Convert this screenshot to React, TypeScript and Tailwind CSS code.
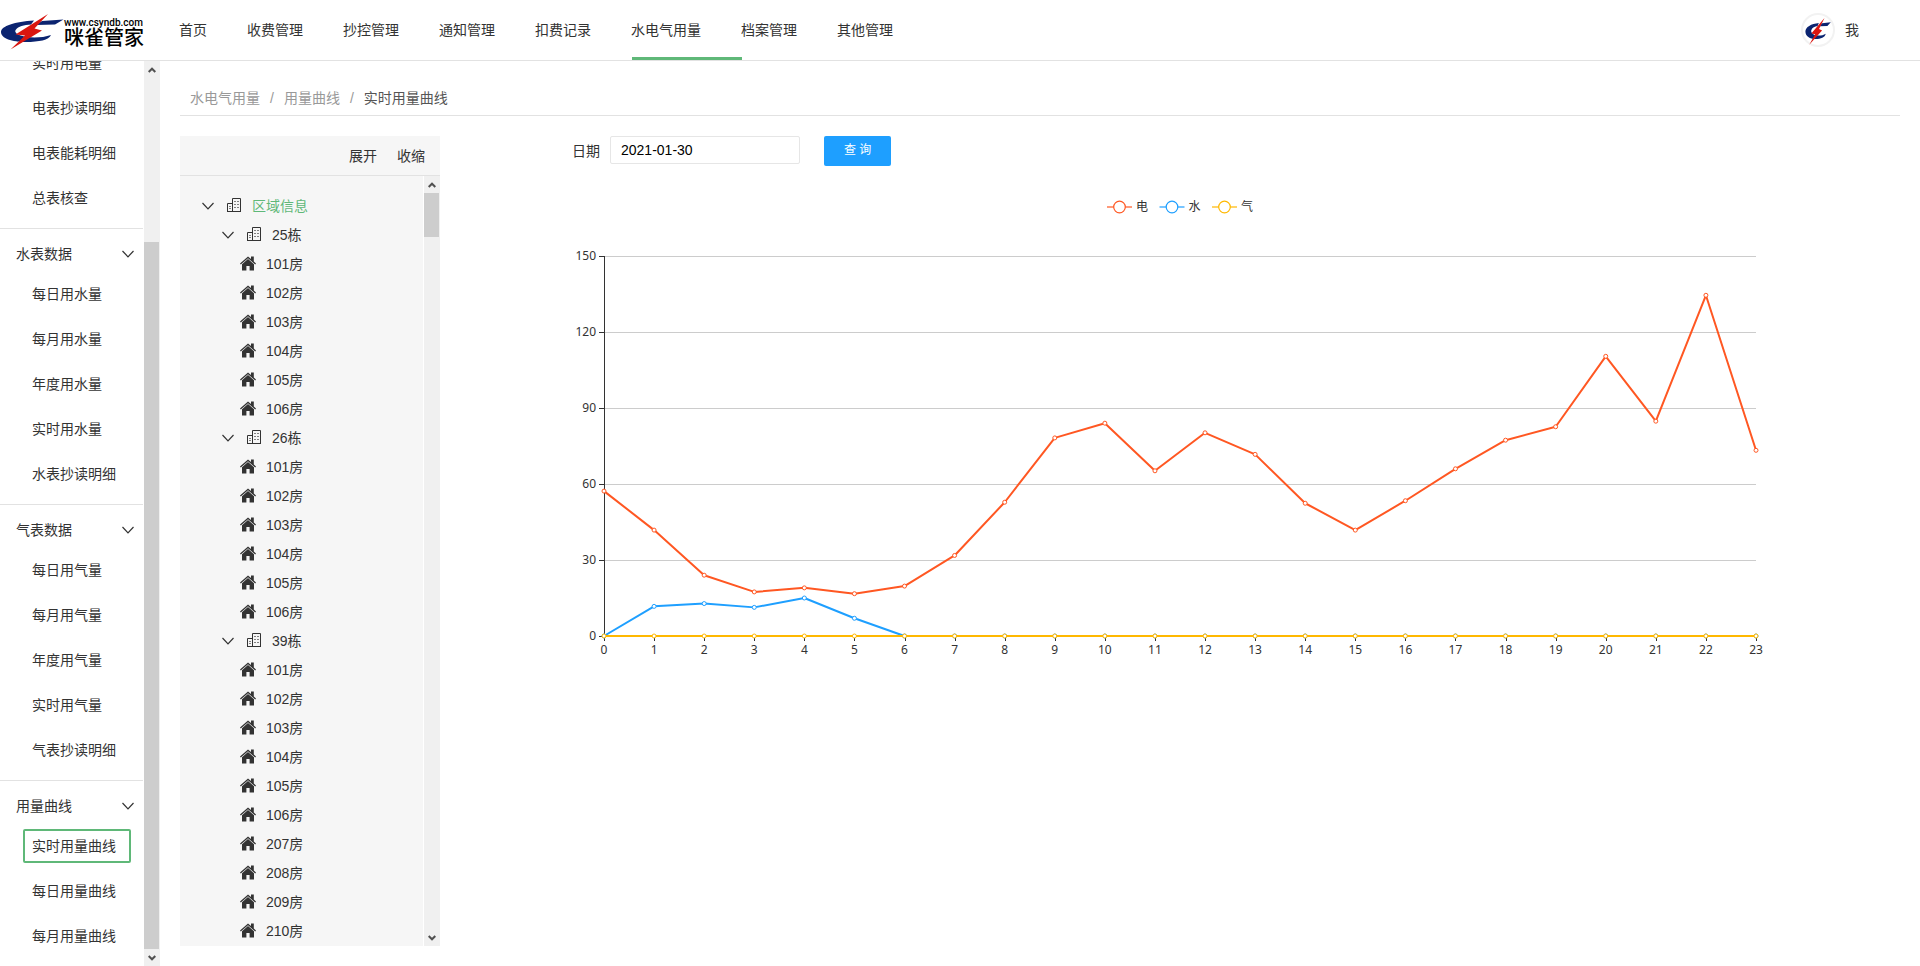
import React, { useState } from 'react';

const navItems = ['首页', '收费管理', '抄控管理', '通知管理', '扣费记录', '水电气用量', '档案管理', '其他管理'];

const menuGroups = [
    { title: '', items: ['实时用电量', '电表抄读明细', '电表能耗明细', '总表核查'] },
    { title: '水表数据', items: ['每日用水量', '每月用水量', '年度用水量', '实时用水量', '水表抄读明细'] },
    { title: '气表数据', items: ['每日用气量', '每月用气量', '年度用气量', '实时用气量', '气表抄读明细'] },
    { title: '用量曲线', items: ['实时用量曲线', '每日用量曲线', '每月用量曲线'] },
];

const buildings = [
    { name: '25栋', rooms: ['101房', '102房', '103房', '104房', '105房', '106房'] },
    { name: '26栋', rooms: ['101房', '102房', '103房', '104房', '105房', '106房'] },
    { name: '39栋', rooms: ['101房', '102房', '103房', '104房', '105房', '106房', '207房', '208房', '209房', '210房'] },
];

const zeros = Array(24).fill(0);

const series = [
    {
        name: '电',
        color: '#FF5722',
        data: [57.2, 41.8, 24, 17.4, 19, 16.7, 19.7, 31.8, 52.8, 78.2, 84, 65.2, 80.2, 71.7, 52.4, 41.8, 53.4, 66, 77.3, 82.6, 110.4, 84.8, 134.5, 73.3],
    },
    { name: '水', color: '#1E9FFF', data: [0, 11.7, 12.8, 11.3, 15, 7, ...Array(18).fill(0)] },
    { name: '气', color: '#FFB800', data: zeros },
];

const LogoMark = ({ className }: { className: string }) => (
    <svg viewBox="0 0 64 40" preserveAspectRatio="none" className={className} aria-hidden="true">
        <path d="M42 11 L63.5 9.5 L55 14.5 L36 15 Z" fill="#0b2470" />
        <path d="M34 10.5 C15 11.5 1 16 1 22 C1 28.5 12 32 26 32 C39 32 49 30 51 25 C44 27.5 34 28 27 27 C17 25.5 13.5 22 16 19.5 C18 16.5 24 15 31 14.5 Z" fill="#0b2470" />
        <path d="M48 4 L15.5 24.5 L25 25.5 L10.5 39.5 L42 20.5 L34.5 18.5 Z" fill="#d9150f" />
    </svg>
);

const Chevron = ({ className }: { className: string }) => (
    <svg viewBox="0 0 12 12" className={className} fill="none" stroke="#333" strokeWidth="1.2" aria-hidden="true">
        <path d="M0.5 3 L6 8.8 L11.5 3" />
    </svg>
);

const BuildingIcon = () => (
    <svg viewBox="0 0 15 15" className="w-[15px] h-[15px] shrink-0" fill="none" stroke="#333" aria-hidden="true">
        <path d="M5.5 13.5 V0.5 H13.5 V13.5 H0.5 V5.5 H5.5 M0 13.5 H14" />
        <path d="M7 3.5 H12 M7 6.5 H12 M7 9.5 H12 M2 8.5 H4.5 M2 10.5 H4.5" strokeDasharray="2 1" strokeOpacity="0.6" />
    </svg>
);

const HouseIcon = () => (
    <svg viewBox="0 0 16 15" className="w-4 h-[15px] shrink-0" fill="#333" aria-hidden="true">
        <path d="M8 0.5 L0 7.6 L0.8 8.5 L8 2.2 L15.2 8.5 L16 7.6 L13.8 5.6 V0.5 H11 V3.1 Z" />
        <path d="M8 3 L2 8.3 V14.5 H6.4 V10 H9.6 V14.5 H14 V8.3 Z" />
    </svg>
);

const ScrollArrow = ({ down = false }: { down?: boolean }) => (
    <span className="flex h-[17px] items-center justify-center pr-px">
        <svg viewBox="0 0 8 6" className="w-2 h-1.5" fill="none" stroke="#505050" strokeWidth="2" aria-hidden="true">
            <path d={down ? 'M0.7 1 L4 4.3 L7.3 1' : 'M0.7 5 L4 1.7 L7.3 5'} />
        </svg>
    </span>
);

const UsageChart = () => {
    const left = 144;
    const right = 1296;
    const top = 60;
    const bottom = 440;
    const x = (i: number) => left + (i * (right - left)) / 23;
    const y = (v: number) => bottom - (v * (bottom - top)) / 150;

    return (
        <svg viewBox="0 0 1440 500" className="block w-full font-['Noto_Sans','Noto_Sans_CJK_SC',sans-serif] text-[12px]" role="img" aria-label="实时用量曲线">
            {series.map((s, i) => (
                <g key={s.name} transform={`translate(${647 + i * 52.5} 11)`}>
                    <path d="M0 0 H25" stroke={s.color} strokeWidth="1.5" strokeOpacity="0.8" />
                    <circle cx="12.5" cy="0" r="5.8" fill="#fff" stroke={s.color} strokeWidth="1.2" />
                    <text x="29" y="4" fill="#333">{s.name}</text>
                </g>
            ))}

            {[0, 30, 60, 90, 120, 150].map(v => (
                <g key={v}>
                    {v > 0 && <path d={`M${left} ${Math.round(y(v)) + 0.5} H${right}`} stroke="#ccc" />}
                    <path d={`M${left - 5} ${Math.round(y(v)) + 0.5} H${left}`} stroke="#333" />
                    <text x={left - 8} y={y(v) + 4} textAnchor="end" fill="#333">{v}</text>
                </g>
            ))}
            <path d={`M${left + 0.5} ${top} V${bottom + 5}`} stroke="#333" />
            {zeros.map((_, i) => (
                <g key={i}>
                    <path d={`M${Math.round(x(i)) + 0.5} ${bottom} V${bottom + 5}`} stroke="#333" />
                    <text x={x(i)} y={bottom + 18} textAnchor="middle" fill="#333">{i}</text>
                </g>
            ))}

            {series.map(s => (
                <g key={s.name} fill="none" stroke={s.color}>
                    <polyline points={s.data.map((v, i) => `${x(i)},${y(v)}`).join(' ')} strokeWidth="2" strokeLinejoin="bevel" />
                    {s.data.map((v, i) => (
                        <circle key={i} cx={x(i)} cy={y(v)} r="2" fill="#fff" strokeWidth="1" />
                    ))}
                </g>
            ))}
        </svg>
    );
};

export default function App() {
    const [date, setDate] = useState('2021-01-30');
    const [expanded, setExpanded] = useState(true);
    const [active, setActive] = useState('实时用量曲线');

    return (
        <div className="flex h-screen flex-col bg-white font-['Liberation_Sans','Noto_Sans_CJK_SC',sans-serif] text-sm text-[#333]">
            <header className="flex h-[61px] shrink-0 items-center border-b border-[#e2e2e2]">
                <a href="#" className="flex w-[159px] shrink-0 items-center font-['Roboto','Noto_Sans_CJK_SC',sans-serif] font-medium text-black">
                    <LogoMark className="h-10 w-16 shrink-0" />
                    <span className="flex flex-col pt-1 whitespace-nowrap">
                        <span className="text-[10px] leading-3">www.csyndb.com</span>
                        <span className="text-[20px] leading-[18px]">咪雀管家</span>
                    </span>
                </a>
                <nav className="flex h-full flex-1">
                    {navItems.map(item => (
                        <a key={item} href="#" className="relative flex items-center px-5 whitespace-nowrap">
                            {item}
                            {item === '水电气用量' && <span className="absolute bottom-0 left-[21px] h-[3px] w-full bg-[#5fb878]" />}
                        </a>
                    ))}
                </nav>
                <a href="#" className="mr-[61px] flex items-center gap-2.5">
                    <span className="flex h-[34px] w-[34px] items-center justify-center rounded-full border-2 border-[#f2f2f2]">
                        <LogoMark className="h-[30px] w-[26px] shrink-0" />
                    </span>
                    我
                </a>
            </header>

            <div className="flex min-h-0 flex-1">
                <aside className="flex w-40 shrink-0">
                    <div className="flex w-[143px] flex-col justify-end overflow-hidden">
                        {menuGroups.map(group => (
                            <section key={group.title} className={group.title ? 'border-t border-[#e2e2e2] pt-0.5 pb-[13px]' : 'pb-[13px]'}>
                                {group.title && (
                                    <button className="flex h-[46px] w-full items-center justify-between pl-4 pr-[9px]">
                                        {group.title}
                                        <Chevron className="h-3 w-3" />
                                    </button>
                                )}
                                <ul className="flex flex-col gap-[11px]">
                                    {group.items.map(item => (
                                        <li key={item} className="flex pl-[23px]">
                                            <button
                                                onClick={() => setActive(item)}
                                                className={`h-[34px] w-[108px] rounded-xs border-2 pl-[7px] text-left whitespace-nowrap ${item === active ? 'border-[#5fb878]' : 'border-transparent'}`}
                                            >
                                                {item}
                                            </button>
                                        </li>
                                    ))}
                                </ul>
                            </section>
                        ))}
                    </div>
                    <div className="ml-px flex w-4 flex-col bg-[#f0f0f0]">
                        <ScrollArrow />
                        <span className="flex-[164]" />
                        <span className="mr-px flex-[707] bg-[#cdcdcd]" />
                        <ScrollArrow down />
                    </div>
                </aside>

                <main className="flex min-w-0 flex-1 flex-col p-5">
                    <nav className="flex h-[35px] shrink-0 items-center gap-2.5 border-b border-[#e2e2e2] pl-2.5 text-[#999]">
                        <a href="#">水电气用量</a>
                        <span>/</span>
                        <a href="#">用量曲线</a>
                        <span>/</span>
                        <span className="text-[#555]">实时用量曲线</span>
                    </nav>

                    <div className="mt-5 flex min-h-0 flex-1">
                        <section className="flex w-[260px] shrink-0 flex-col bg-[#f6f6f6]">
                            <div className="flex h-10 shrink-0 items-center justify-end gap-5 border-b border-[#e2e2e2] pr-[15px]">
                                <button onClick={() => setExpanded(true)}>展开</button>
                                <button onClick={() => setExpanded(false)}>收缩</button>
                            </div>
                            <div className="flex min-h-0 flex-1">
                                <div className="min-w-0 flex-1 overflow-hidden border-r border-white pt-[15px]">
                                    <div className="flex h-[29px] items-center pl-[22px]">
                                        <Chevron className="h-3 w-3" />
                                        <span className="ml-[13px] flex items-center gap-2.5 text-[#5fb878]"><BuildingIcon />区域信息</span>
                                    </div>
                                    {expanded && buildings.map(b => (
                                        <div key={b.name}>
                                            <div className="flex h-[29px] items-center pl-[42px]">
                                                <Chevron className="h-3 w-3" />
                                                <span className="ml-[13px] flex items-center gap-2.5"><BuildingIcon />{b.name}</span>
                                            </div>
                                            {b.rooms.map(room => (
                                                <div key={room} className="flex h-[29px] items-center gap-2.5 pl-[60px]">
                                                    <HouseIcon />{room}
                                                </div>
                                            ))}
                                        </div>
                                    ))}
                                </div>
                                <div className="flex w-4 flex-col bg-[#f0f0f0]">
                                    <ScrollArrow />
                                    <span className="mr-px flex-[44] bg-[#cdcdcd]" />
                                    <span className="flex-[692]" />
                                    <ScrollArrow down />
                                </div>
                            </div>
                        </section>

                        <section className="ml-5 min-w-0 flex-1">
                            <form className="flex h-[30px] items-start pl-28" onSubmit={e => e.preventDefault()}>
                                <label htmlFor="date" className="leading-[30px]">日期</label>
                                <input
                                    id="date"
                                    type="text"
                                    value={date}
                                    onChange={e => setDate(e.target.value)}
                                    className="ml-2.5 h-7 w-[190px] rounded-xs border border-[#e6e6e6] pl-2.5 text-black outline-none"
                                />
                                <button type="submit" className="ml-6 h-[30px] rounded-xs bg-[#1e9fff] px-5 text-[12px] whitespace-nowrap text-white">查 询</button>
                            </form>
                            <div className="mt-[30px]">
                                <UsageChart />
                            </div>
                        </section>
                    </div>
                </main>
            </div>
        </div>
    );
}
